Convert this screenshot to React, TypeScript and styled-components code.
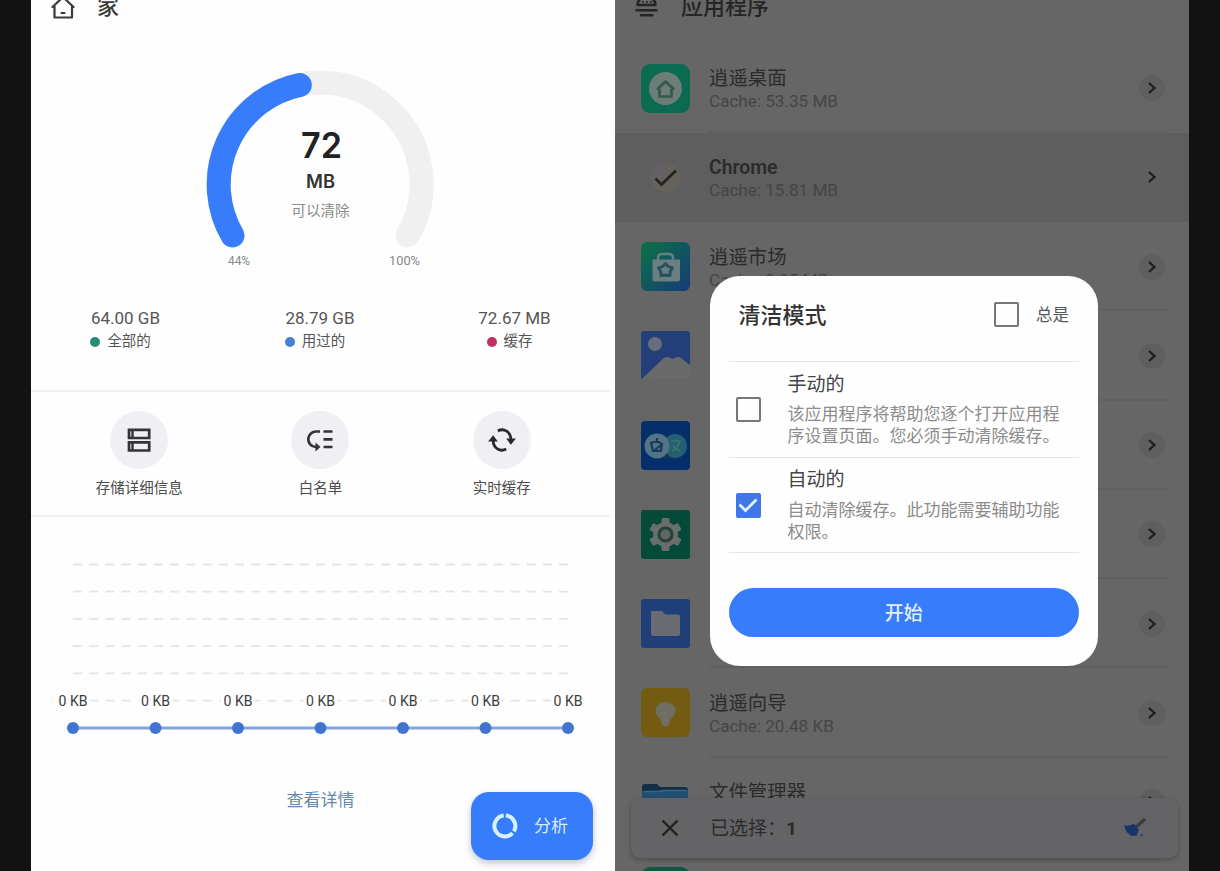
import React from "react";
import styled, { createGlobalStyle } from "styled-components";

const cjk = `"Noto Sans CJK SC", sans-serif`;

const GlobalStyle = createGlobalStyle`
  html, body { margin: 0; background: #121212; overflow: hidden; }
  * { box-sizing: border-box; }
  body { font-family: Roboto, ${cjk}; }
  svg { display: block; }
`;

const Screens = styled.div`
  display: flex;
  width: 1220px;
  height: 871px;
  padding: 0 31px;
  overflow: hidden;
  background: #121212;
`;

const HomePanel = styled.main`
  position: relative;
  display: flex;
  flex-direction: column;
  width: 584px;
  height: 871px;
  background: #fefefe;
  overflow: hidden;
`;

const AppsPanel = styled.section`
  position: relative;
  display: flex;
  flex-direction: column;
  width: 574px;
  height: 871px;
  background: #666;
  overflow: hidden;
`;

const Header = styled.header<{ $tint: string }>`
  display: flex;
  flex: none;
  align-items: center;
  gap: 22px;
  height: 40px;
  margin: -13px 0 16.5px;
  padding-left: 20px;
  color: ${(p) => p.$tint};
  font-size: 22px;
  font-weight: 500;
  line-height: 40px;
`;

const GaugeArea = styled.div`
  height: 250px;
  flex: none;
  margin-top: -1px;
  padding-left: 149px;
`;

const Stats = styled.div`
  display: grid;
  grid-template-columns: repeat(3, 194.5px);
  justify-content: center;
  width: 578px;
  height: 97px;
  flex: none;
  padding-top: 14.5px;
`;

const Stat = styled.div`
  display: flex;
  flex-direction: column;
  align-items: center;
  color: #555;
`;

const StatValue = styled.div`
  font-size: 17px;
  line-height: 23px;
`;

const StatLabel = styled.div<{ $dot: string }>`
  display: flex;
  align-items: center;
  gap: 7px;
  padding-right: 10px;
  font-size: 14.5px;
  line-height: 24px;
  &::before {
    content: "";
    width: 10px;
    height: 10px;
    border-radius: 50%;
    background: ${(p) => p.$dot};
  }
`;

const Actions = styled.div`
  display: grid;
  grid-template-columns: repeat(3, 181.3px);
  justify-content: center;
  width: 579px;
  height: 127px;
  flex: none;
  border: solid #f0f0f1;
  border-width: 2px 0;
  padding-top: 19px;
`;

const Action = styled.div`
  display: flex;
  flex-direction: column;
  align-items: center;
  gap: 8px;
  color: #4c4c4c;
  font-size: 14.5px;
  line-height: 23px;
`;

const ActionCircle = styled.div`
  display: flex;
  align-items: center;
  justify-content: center;
  width: 58px;
  height: 58px;
  border-radius: 50%;
  background: #efeff4;
`;

const ChartArea = styled.div`
  height: 266px;
  flex: none;
  padding-top: 1px;
`;

const DetailsLink = styled.a`
  width: 579px;
  text-align: center;
  color: #6289ae;
  font-size: 17px;
  line-height: 30px;
  margin-top: 2px;
`;

const AnalyzeButton = styled.button`
  position: absolute;
  left: 440px;
  top: 792px;
  display: flex;
  align-items: center;
  gap: 16px;
  width: 122px;
  height: 68px;
  padding: 0 0 0 21px;
  border: 0;
  border-radius: 18px;
  background: #367cfb;
  box-shadow: 0 3px 7px rgba(50, 60, 120, 0.3);
  color: #dcebff;
  font: 17px Roboto, ${cjk};
`;

const ButtonText = styled.span`
  padding-bottom: 3px;
`;

const AppRow = styled.div<{ $selected?: boolean }>`
  display: flex;
  flex: none;
  align-items: center;
  height: 89.25px;
  padding-left: 26px;
  background: ${(p) => (p.$selected ? "#5e5e5e" : "transparent")};
`;

const AppBody = styled.div<{ $plain?: boolean }>`
  display: flex;
  align-items: center;
  justify-content: space-between;
  width: 458px;
  height: 100%;
  margin-left: 19px;
  padding: 2px 2px 0 0;
  border-bottom: 2px solid ${(p) => (p.$plain ? "transparent" : "#606060")};
`;

const AppText = styled.div`
  padding-top: 1px;
`;

const AppName = styled.div<{ $bold?: boolean }>`
  color: #2b2b2b;
  font-size: 19.4px;
  font-weight: ${(p) => (p.$bold ? 600 : 400)};
  line-height: 25px;
`;

const AppCache = styled.div`
  color: #454545;
  font-size: 17.1px;
  line-height: 20px;
`;

const Chevron = styled.div`
  display: flex;
  align-items: center;
  justify-content: center;
  width: 26px;
  height: 26px;
  border-radius: 50%;
  background: #5f5f5f;
`;

const SelectionBar = styled.div`
  position: absolute;
  left: 16px;
  top: 798px;
  display: flex;
  align-items: center;
  width: 547px;
  height: 60px;
  padding: 0 31px 0 30px;
  border-radius: 9px;
  background: #646365;
  box-shadow: 0 2px 5px rgba(0, 0, 0, 0.26);
  color: #2b2b2b;
  font-size: 19px;
`;

const SelectionText = styled.div`
  flex: 1;
  padding: 0 0 3px 31px;
  b { font-weight: 700; }
`;

const Dialog = styled.div`
  position: absolute;
  left: 94.5px;
  top: 276px;
  display: flex;
  flex-direction: column;
  width: 388.5px;
  height: 390px;
  padding: 0 19px;
  border-radius: 30px;
  background: #fefefe;
`;

const DialogHeader = styled.div`
  display: flex;
  align-items: center;
  height: 86px;
  padding: 0 10px 8px;
  border-bottom: 1px solid #e6e6e6;
`;

const DialogTitle = styled.h2`
  flex: 1;
  margin: 0;
  padding-bottom: 3px;
  color: #333;
  font-size: 22px;
  font-weight: 500;
`;

const AlwaysLabel = styled.span`
  margin-left: 17.5px;
  padding-bottom: 1px;
  color: #555;
  font-size: 16.5px;
`;

const CheckBox = styled.span<{ $on?: boolean }>`
  display: flex;
  flex: none;
  align-items: center;
  justify-content: center;
  width: 25px;
  height: 25px;
  border: 2px solid ${(p) => (p.$on ? "#3f77e6" : "#777")};
  border-radius: 2px;
  background: ${(p) => (p.$on ? "#3f77e6" : "transparent")};
`;

const Option = styled.div`
  display: flex;
  align-items: center;
  gap: 27px;
  height: 95.5px;
  padding: 1px 0 0 7px;
  border-bottom: 1px solid #e6e6e6;
`;

const OptionTitle = styled.div`
  color: #444;
  font-size: 19px;
  line-height: 26px;
  margin-bottom: 5.5px;
`;

const OptionText = styled.div`
  width: 275px;
  color: #8c8c8c;
  font-size: 17px;
  line-height: 22px;
  margin-bottom: 1px;
`;

const StartButton = styled.button`
  height: 49px;
  margin-top: 35px;
  padding: 0 0 3px;
  border: 0;
  border-radius: 25px;
  background: #367cfb;
  color: #e2f0ff;
  font: 500 19px Roboto, ${cjk};
`;

const HomeIcon = () => (
  <svg width="24" height="26" viewBox="0 0 24 26" fill="none" stroke="#3b3b3b" strokeWidth="2.200" strokeLinejoin="round" strokeLinecap="round">
    <path d="M1.500 13 12 3l10.500 10M3.500 12v11.500h17.500V12" />
    <path d="M10.500 19h3" />
  </svg>
);

const StackIcon = () => (
  <svg width="24" height="26" viewBox="0 0 24 26" fill="none" stroke="#252525" strokeWidth="2.500" strokeLinecap="round">
    <path d="M2.500 11c0-5 4-8 9-8s9 3 9 8z" strokeLinejoin="round" />
    <path d="M8 8h.1M12 8h.1M16 8h.1" strokeWidth="1.800" />
    <path d="M1.500 16.300h20M6 21.300h11.500" />
  </svg>
);

const Gauge = () => (
  <svg width="280" height="250" viewBox="180 43 280 250" fontFamily="Roboto, 'Noto Sans CJK SC', sans-serif" textAnchor="middle">
    <g fill="none" strokeWidth="24" strokeLinecap="round">
      <path d="M232.500 235.500A101.500 101.500 0 1 1 407.500 235.500" stroke="#f0f0f0" />
      <path d="M232.500 235.500A101.500 101.500 0 0 1 299.800 85" stroke="#367cfb" />
    </g>
    <text x="321.500" y="158" fontSize="35.500" fontWeight="600" fontFamily="Inter, sans-serif" fill="#222" textLength="41" lengthAdjust="spacingAndGlyphs">72</text>
    <text x="320.500" y="187.500" fontSize="18" fontWeight="600" fontFamily="Inter, sans-serif" fill="#333" textLength="29" lengthAdjust="spacingAndGlyphs">MB</text>
    <text x="320.500" y="216" fontSize="14.600" fill="#8c8c8c">可以清除</text>
    <text x="239" y="265" fontSize="12.500" fill="#888" textLength="22" lengthAdjust="spacingAndGlyphs">44%</text>
    <text x="404.500" y="265" fontSize="12.500" fill="#888" textLength="31" lengthAdjust="spacingAndGlyphs">100%</text>
  </svg>
);

const gridLines = [564.5, 591.7, 618.9, 646.1, 673.4, 700.6];
const points = [73, 155.5, 238, 320.5, 403, 485.5, 568];

const CacheChart = () => (
  <svg width="578" height="265" viewBox="31 518 578 265" fontFamily="Roboto, sans-serif" textAnchor="middle">
    {gridLines.map((y) => (
      <line key={y} x1="73" x2="568" y1={y} y2={y} stroke="#e4e4e4" strokeWidth="1.800" strokeDasharray="9 7.200" />
    ))}
    <line x1="73" x2="568" y1="728" y2="728" stroke="#85a5da" strokeWidth="3" />
    {points.map((x) => (
      <g key={x}>
        <rect x={x - 17} y="692" width="34" height="18" fill="#fefefe" />
        <circle cx={x} cy="728" r="6" fill="#3f74d0" />
        <text x={x} y="705.800" fontSize="14.800" fill="#3c3c3c" textLength="29" lengthAdjust="spacingAndGlyphs">0 KB</text>
      </g>
    ))}
  </svg>
);

const ServerIcon = () => (
  <svg width="26" height="26" viewBox="0 0 26 26" fill="none" stroke="#333338" strokeWidth="2.700">
    <path d="M3 2.800h20.200v8.200H3zM3 15.300h20.200v8.200H3z" />
    <path d="M6.500 3v7M6.500 16v7" strokeWidth="2.400" />
  </svg>
);

const WhitelistIcon = () => (
  <svg width="28" height="26" viewBox="0 0 28 26" fill="none" stroke="#333338" strokeWidth="2.700">
    <path d="M14 4.500h-3.500a7.500 7.500 0 0 0-1 15.500h1M17.500 4.500h9M17.500 12.300h9M17.500 20h9" />
    <path d="M9.500 15.500v9l5-4.500z" fill="#333338" stroke="none" />
  </svg>
);

const RefreshIcon = () => (
  <svg width="28" height="26" viewBox="0 0 30 28" fill="none" stroke="#29292d" strokeWidth="3">
    <path d="M10.500 4.200c6.500-3.400 14 1 14 9.300M19.500 23.800c-6.500 3.400-14-1-14-9.300" />
    <path d="M19.500 12.500h10.500l-5.500 6.500zM0 15.500h10.500L5.500 9z" fill="#29292d" stroke="none" />
  </svg>
);

const DonutIcon = () => (
  <svg width="26" height="28" viewBox="0 0 26 28" fill="none" stroke="#d8f1ff" strokeWidth="4">
    <path d="M13.800 3.500a10.500 10.500 0 0 1 8 15.900M20.500 21.200a10.500 10.500 0 1 1-8.800-17.700" />
  </svg>
);

const Tile = ({ children }: { children: React.ReactNode }) => (
  <svg width="49" height="49" viewBox="0 0 49 49" fill="none">{children}</svg>
);

const LauncherIcon = () => (
  <Tile>
    <rect width="49" height="49" rx="9" fill="#0b6b50" />
    <circle cx="24.500" cy="24.500" r="16.500" fill="#6c7c77" />
    <path d="M16 25.500l8.500-8 8.500 8M18.500 25v7.500h12V25" stroke="#34564b" strokeWidth="2.600" strokeLinejoin="round" />
  </Tile>
);

const CheckedIcon = () => (
  <Tile>
    <circle cx="24.500" cy="24.500" r="15" fill="#64625b" />
    <path d="M10 27a15 15 0 0 1 14-17v14z" fill="#655f66" />
    <path d="M14.500 25.500l6 6L35 17.500" stroke="#222" strokeWidth="2.700" />
  </Tile>
);

const MarketIcon = () => (
  <Tile>
    <defs>
      <linearGradient id="market" x1="0" y1="0" x2="1" y2="1">
        <stop offset=".15" stopColor="#0d6b4c" />
        <stop offset="1" stopColor="#173a78" />
      </linearGradient>
    </defs>
    <rect width="49" height="49" rx="6" fill="url(#market)" />
    <path d="M17 19v-3q0-4 4-4h7q4 0 4 4v3" stroke="#68807e" strokeWidth="2.500" />
    <path d="M11.500 17.500h27.500v20q0 2-2 2H13.500q-2 0-2-2z" fill="#6b7f80" />
    <path d="M24.500 21.500l2.800 3 4.200 1.300-2.300 3.700-.2 4.200-4.500-.7-4.500.7-.2-4.200-2.300-3.700 4.200-1.300z" stroke="#22505c" strokeWidth="2.800" strokeLinejoin="round" />
  </Tile>
);

const GalleryIcon = () => (
  <Tile>
    <path d="M3 0h43q3 0 3 3v31L40 27q-3-2-6 0l-2 1-3-1q-4-2-7 1L1 48l-1-1V3q0-3 3-3z" fill="#233e78" />
    <path d="M1 48l21-20q3-3 7-1l3 1 2-1q3-2 6 0l9 8v12z" fill="#6a6a6a" />
    <circle cx="14" cy="13" r="7" fill="#666d7c" />
  </Tile>
);

const TranslateIcon = () => (
  <Tile>
    <rect width="49" height="49" rx="4" fill="#052f6b" />
    <circle cx="34" cy="25" r="12" fill="#245f70" />
    <path d="M30 20h10M35 18v2M39 20q-2 7-8 10M32 24q2 4 7 6" stroke="#3f7376" strokeWidth="1.600" />
    <circle cx="16" cy="25" r="12.500" fill="#527486" />
    <path d="M10 22l6-2 5 3-1 7h-8zM16 17v5M13 30l7-6" stroke="#183c5a" strokeWidth="2.200" />
    <path d="M22 37l4-5 4 5z" fill="#1a3754" />
  </Tile>
);

const SettingsIcon = () => (
  <Tile>
    <rect width="49" height="49" rx="3" fill="#034a39" />
    <g fill="#696d6b">
      <circle cx="24.500" cy="24.500" r="12.500" />
      {[0, 60, 120].map((a) => (
        <rect key={a} x="20.500" y="8" width="8" height="33" rx="1.500" transform={`rotate(${a} 24.500 24.500)`} />
      ))}
    </g>
    <circle cx="24.500" cy="24.500" r="6.500" fill="#626665" stroke="#26423b" strokeWidth="3" />
  </Tile>
);

const FolderIcon = () => (
  <Tile>
    <rect width="49" height="49" rx="3" fill="#203e77" />
    <path d="M10 12h11l3.500 3.500H37q2 0 2 2V35q0 2-2 2H12q-2 0-2-2z" fill="#696b70" />
  </Tile>
);

const GuideIcon = () => (
  <Tile>
    <rect width="49" height="49" rx="6" fill="#735b11" />
    <path d="M24.500 14c-6 0-10 4-10 9 0 4 3 6 5 8.500l1.500 5q3.500 4 7 0l1.500-5c2-2.500 5-4.500 5-8.500 0-5-4-9-10-9z" fill="#706d62" />
    <path d="M24.500 24v9" stroke="#777267" strokeWidth="2" />
  </Tile>
);

const FileManagerIcon = () => (
  <Tile>
    <path d="M1 9q0-3 3-3h12l3 3h25q3 0 3 3v27H1z" fill="#122f48" />
    <path d="M1 13h18l3-1h25v27H1z" fill="#234e73" />
    <path d="M3 13.500h16l3-1h24" stroke="#3a6482" strokeWidth="1.500" />
  </Tile>
);

const InputIcon = () => (
  <Tile>
    <rect width="49" height="49" rx="9" fill="#0d5743" />
  </Tile>
);

const CloseIcon = () => (
  <svg width="18" height="18" viewBox="0 0 18 18" fill="none" stroke="#222" strokeWidth="2.400">
    <path d="M1.500 1.500l15 15M16.500 1.500l-15 15" />
  </svg>
);

const BroomIcon = () => (
  <svg width="24" height="22" viewBox="0 0 24 22" fill="none">
    <path d="M13 10l9-8" stroke="#353c4b" strokeWidth="3.200" />
    <path d="M1 8l3 1 7-2 5 6-2.500 5.500-5 .500-5-4z" fill="#18346b" />
    <path d="M17.500 18l2.500 .5" stroke="#30466f" strokeWidth="2" />
  </svg>
);

type AppItem = { id: string; name?: string; cache?: string; Icon: React.FC; selected?: boolean };

const apps: AppItem[] = [
  { id: "launcher", name: "逍遥桌面", cache: "53.35 MB", Icon: LauncherIcon },
  { id: "chrome", name: "Chrome", cache: "15.81 MB", Icon: CheckedIcon, selected: true },
  { id: "market", name: "逍遥市场", cache: "8.95 MB", Icon: MarketIcon },
  { id: "gallery", Icon: GalleryIcon },
  { id: "translate", Icon: TranslateIcon },
  { id: "settings", Icon: SettingsIcon },
  { id: "folder", Icon: FolderIcon },
  { id: "guide", name: "逍遥向导", cache: "20.48 KB", Icon: GuideIcon },
  { id: "files", name: "文件管理器", Icon: FileManagerIcon },
  { id: "input", name: "逍遥输入法", Icon: InputIcon },
];

const stats = [
  { value: "64.00 GB", label: "全部的", dot: "#2a8a74" },
  { value: "28.79 GB", label: "用过的", dot: "#4a7fd6" },
  { value: "72.67 MB", label: "缓存", dot: "#c2305f" },
];

const actions = [
  { label: "存储详细信息", Icon: ServerIcon },
  { label: "白名单", Icon: WhitelistIcon },
  { label: "实时缓存", Icon: RefreshIcon },
];

export default function App() {
  return (
    <Screens>
      <GlobalStyle />
      <HomePanel>
        <Header $tint="#3b3b3b"><HomeIcon />家</Header>
        <GaugeArea><Gauge /></GaugeArea>
        <Stats>
          {stats.map((s) => (
            <Stat key={s.label}>
              <StatValue>{s.value}</StatValue>
              <StatLabel $dot={s.dot}>{s.label}</StatLabel>
            </Stat>
          ))}
        </Stats>
        <Actions>
          {actions.map(({ label, Icon }) => (
            <Action key={label}>
              <ActionCircle><Icon /></ActionCircle>
              {label}
            </Action>
          ))}
        </Actions>
        <ChartArea><CacheChart /></ChartArea>
        <DetailsLink>查看详情</DetailsLink>
        <AnalyzeButton><DonutIcon /><ButtonText>分析</ButtonText></AnalyzeButton>
      </HomePanel>
      <AppsPanel>
        <Header $tint="#252525"><StackIcon />应用程序</Header>
        {apps.map(({ id, name, cache, Icon, selected }) => (
          <AppRow key={id} $selected={selected}>
            <Icon />
            <AppBody $plain={selected}>
              <AppText>
                {name && <AppName $bold={selected}>{name}</AppName>}
                <AppCache>{cache ? `Cache: ${cache}` : "\u00a0"}</AppCache>
              </AppText>
              <Chevron>
                <svg width="10" height="12" viewBox="0 0 10 12" fill="none" stroke="#1e1e1e" strokeWidth="2.300">
                  <path d="M2 1l5.500 5L2 11" />
                </svg>
              </Chevron>
            </AppBody>
          </AppRow>
        ))}
        <SelectionBar>
          <CloseIcon />
          <SelectionText>已选择：<b>1</b></SelectionText>
          <BroomIcon />
        </SelectionBar>
        <Dialog>
          <DialogHeader>
            <DialogTitle>清洁模式</DialogTitle>
            <CheckBox />
            <AlwaysLabel>总是</AlwaysLabel>
          </DialogHeader>
          <Option>
            <CheckBox />
            <div>
              <OptionTitle>手动的</OptionTitle>
              <OptionText>该应用程序将帮助您逐个打开应用程序设置页面。您必须手动清除缓存。</OptionText>
            </div>
          </Option>
          <Option>
            <CheckBox $on>
              <svg width="20" height="16" viewBox="0 0 20 16" fill="none" stroke="#e2f3ff" strokeWidth="2.800">
                <path d="M1.500 7.500l6 6L18.500 2.500" />
              </svg>
            </CheckBox>
            <div>
              <OptionTitle>自动的</OptionTitle>
              <OptionText>自动清除缓存。此功能需要辅助功能权限。</OptionText>
            </div>
          </Option>
          <StartButton>开始</StartButton>
        </Dialog>
      </AppsPanel>
    </Screens>
  );
}
